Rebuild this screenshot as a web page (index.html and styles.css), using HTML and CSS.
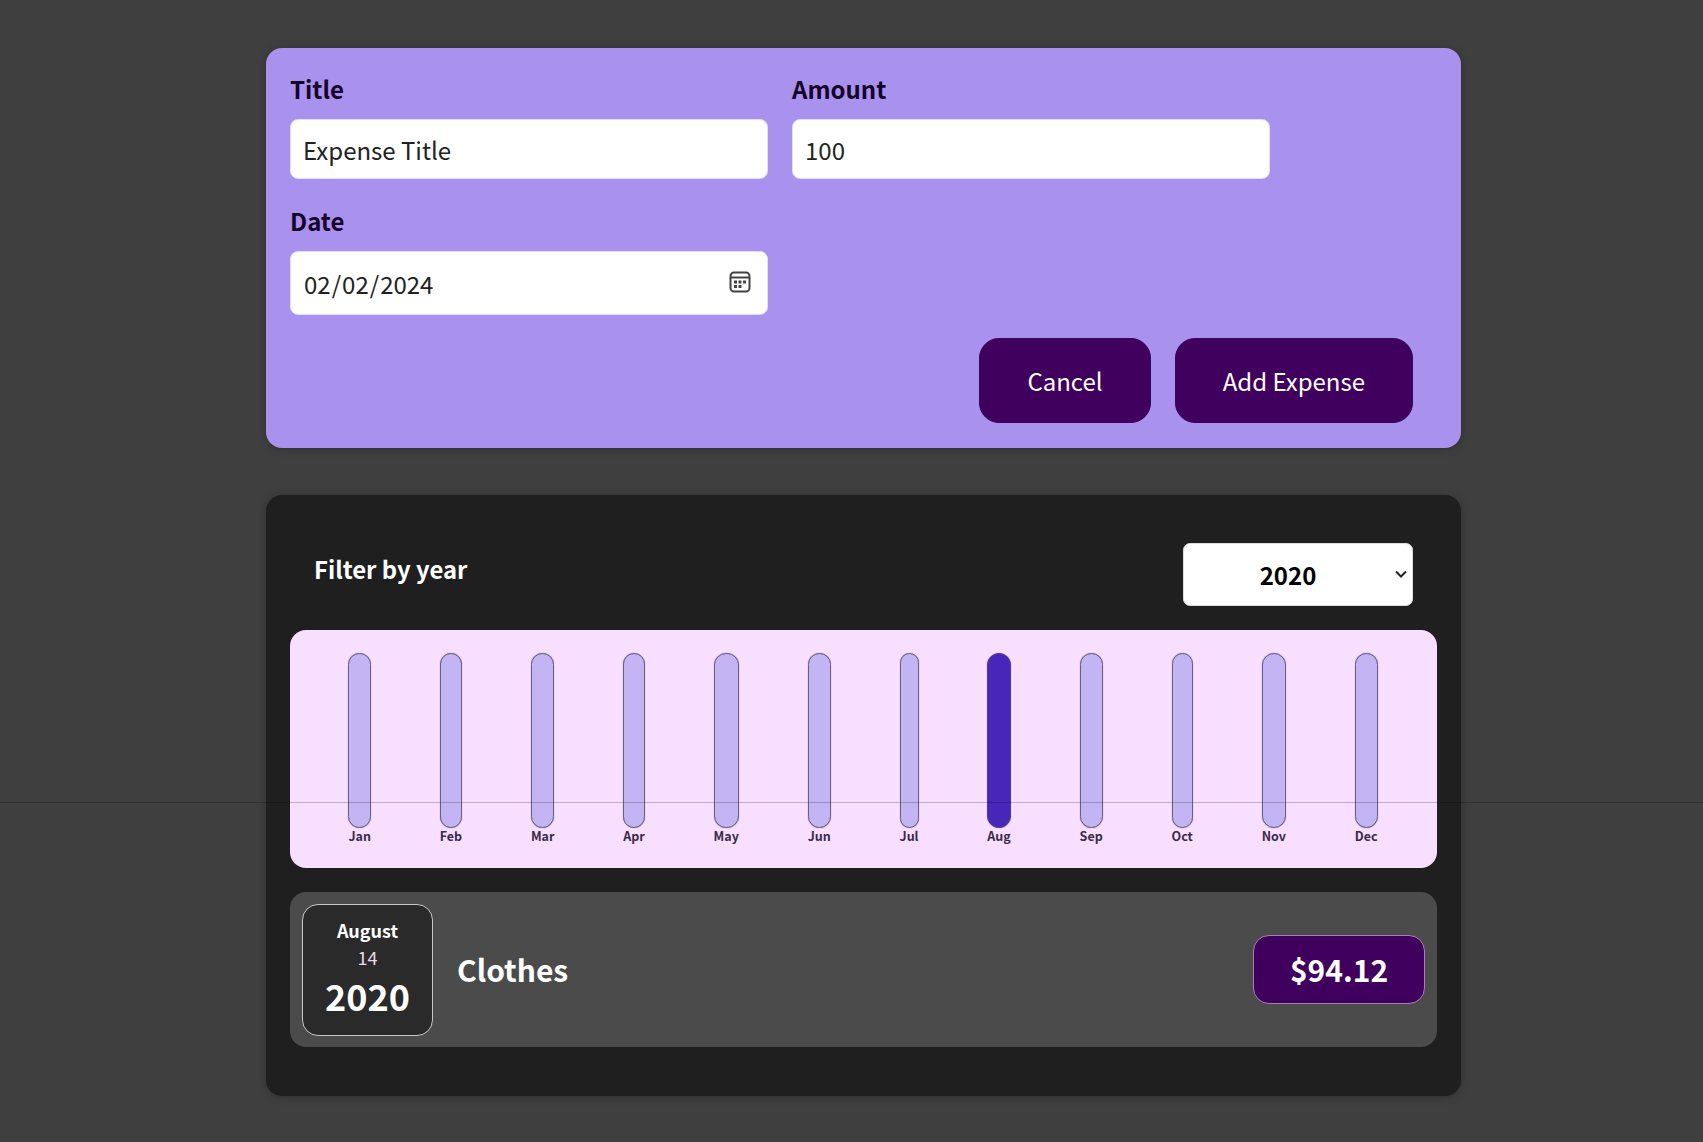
FILE: index.html
```html
<!DOCTYPE html>
<html lang="en">
<head>
  <meta charset="UTF-8" />
  <title>Expenses</title>
  <link rel="stylesheet" href="styles.css">
</head>
<body>
  <div class="screen-line"></div>

  <div class="new-expense">
    <form>
      <div class="controls">
        <div class="control">
          <label>Title</label>
          <input type="text" value="Expense Title" />
        </div>
        <div class="control">
          <label>Amount</label>
          <input type="text" value="100" />
        </div>
        <div class="control">
          <label>Date</label>
          <div class="date-wrap">
            <input class="date-input" type="date" value="2024-02-02" />
            <!-- 달력 아이콘 -->
            <svg class="date-icon" viewBox="0 0 22 22" width="22" height="22" fill="none" stroke="#444" stroke-width="2">
              <rect x="1.5" y="1.5" width="19" height="19" rx="3.5" />
              <path d="M1.5 6.5h19" />
              <g fill="#444" stroke="none">
                <rect x="5" y="9.5" width="3" height="3" />
                <rect x="9.5" y="9.5" width="3" height="3" />
                <rect x="14" y="9.5" width="3" height="3" />
                <rect x="5" y="14" width="3" height="3" />
                <rect x="9.5" y="14" width="3" height="3" />
              </g>
            </svg>
          </div>
        </div>
      </div>
      <div class="actions">
        <button type="button">Cancel</button>
        <button type="submit">Add Expense</button>
      </div>
    </form>
  </div>

  <div class="expenses">
    <div class="filter">
      <label>Filter by year</label>
      <div class="select-wrap">
        <select>
          <option>2020</option>
          <option>2021</option>
          <option>2022</option>
        </select>
        <svg class="select-icon" viewBox="0 0 12 8" width="12" height="8" fill="none" stroke="#222" stroke-width="2">
          <path d="M1 1.5l5 5 5-5" />
        </svg>
      </div>
    </div>

    <div class="chart">
      <div class="chart-bar"><div class="bar"></div><div class="bar-label">Jan</div></div>
      <div class="chart-bar"><div class="bar"></div><div class="bar-label">Feb</div></div>
      <div class="chart-bar"><div class="bar"></div><div class="bar-label">Mar</div></div>
      <div class="chart-bar"><div class="bar"></div><div class="bar-label">Apr</div></div>
      <div class="chart-bar"><div class="bar"></div><div class="bar-label">May</div></div>
      <div class="chart-bar"><div class="bar"></div><div class="bar-label">Jun</div></div>
      <div class="chart-bar"><div class="bar"></div><div class="bar-label">Jul</div></div>
      <div class="chart-bar"><div class="bar bar-active"></div><div class="bar-label">Aug</div></div>
      <div class="chart-bar"><div class="bar"></div><div class="bar-label">Sep</div></div>
      <div class="chart-bar"><div class="bar"></div><div class="bar-label">Oct</div></div>
      <div class="chart-bar"><div class="bar"></div><div class="bar-label">Nov</div></div>
      <div class="chart-bar"><div class="bar"></div><div class="bar-label">Dec</div></div>
    </div>

    <div class="expense-item">
      <div class="expense-date">
        <div class="expense-month">August</div>
        <div class="expense-day">14</div>
        <div class="expense-year">2020</div>
      </div>
      <h2 class="expense-title">Clothes</h2>
      <div class="expense-price">$94.12</div>
    </div>
  </div>
</body>
</html>
```

FILE: styles.css
```css
* {
  box-sizing: border-box;
}

body {
  margin: 0;
  padding: 48px 0 46px 24px;
  background-color: #3f3f3f;
  font-family: "Noto Sans CJK KR", "Noto Sans", sans-serif;
}

/* thin line that runs over the whole screen */
.screen-line {
  position: absolute;
  top: 802px;
  left: 0;
  width: 100%;
  height: 1px;
  background-color: rgba(0, 0, 0, 0.22);
  z-index: 10;
}

/* new expense form */
.new-expense {
  width: 1195px;
  height: 400px;
  margin: 0 auto 47px;
  padding: 25px 24px 0;
  background-color: #a892ee;
  border-radius: 16px;
  box-shadow: 0 1px 8px rgba(0, 0, 0, 0.25);
}

.controls {
  display: flex;
  flex-wrap: wrap;
  gap: 26px 24px;
}

.control {
  width: 478px;
}

.control label {
  display: block;
  margin-bottom: 14px;
  font-size: 24px;
  line-height: 32px;
  font-weight: 700;
  color: #14022a;
}

.control input {
  display: block;
  width: 100%;
  height: 60px;
  padding: 8px 12px;
  font-family: inherit;
  font-size: 24px;
  color: #222;
  background-color: #fff;
  border: 1px solid #e6dcf7;
  border-radius: 8px;
}

.control .date-input {
  height: 64px;
}

.date-wrap {
  position: relative;
}

/* 기본 아이콘은 숨기고 svg를 위에 올림 */
.date-input::-webkit-calendar-picker-indicator {
  opacity: 0;
}

.date-icon {
  position: absolute;
  top: 20px;
  right: 17px;
  pointer-events: none;
}

.actions {
  display: flex;
  justify-content: flex-end;
  gap: 24px;
  margin-top: 23px;
  padding-right: 24px;
}

.actions button {
  height: 85px;
  padding: 0 47px;
  font-family: inherit;
  font-size: 24px;
  color: #fff;
  background-color: #40005d;
  border: 1px solid #40005d;
  border-radius: 20px;
  cursor: pointer;
}

/* expense list */
.expenses {
  width: 1195px;
  height: 601px;
  margin: 0 auto;
  padding: 24px;
  background-color: #1f1f1f;
  border-radius: 16px;
  box-shadow: 0 1px 8px rgba(0, 0, 0, 0.25);
}

.filter {
  display: flex;
  align-items: center;
  justify-content: space-between;
  padding: 24px 24px 0;
  height: 87px;
  color: #fff;
}

.filter label {
  margin-bottom: 13px;
  font-size: 23.8px;
  font-weight: 700;
}

.select-wrap {
  position: relative;
}

.filter select {
  display: block;
  width: 230px;
  height: 63px;
  padding: 0 20px 0 0;
  font-family: inherit;
  font-size: 24px;
  font-weight: 700;
  text-align: center;
  appearance: none;
  background-color: #fff;
  border: 1px solid #ddd;
  border-radius: 7px;
}

.select-icon {
  position: absolute;
  top: 27px;
  right: 6px;
  pointer-events: none;
}

.chart {
  display: flex;
  justify-content: space-around;
  height: 238px;
  margin-top: 24px;
  padding: 23px 25px 0 24px;
  background-color: #f8dfff;
  border-radius: 16px;
}

.chart-bar {
  display: flex;
  flex-direction: column;
  align-items: stretch;
}

.bar {
  height: 175px;
  background-color: #c3b4f3;
  border: 1px solid #6a5f80;
  border-radius: 12px;
  box-shadow: 0 0 1px rgba(70, 60, 90, 0.6);
}

.bar-active {
  background-color: #4826b9;
  border-color: #4f3a9e;
}

.bar-label {
  font-size: 12.5px;
  line-height: 16px;
  font-weight: 700;
  text-align: center;
  color: #3a2a4a;
}

.expense-item {
  display: flex;
  align-items: center;
  height: 155px;
  margin-top: 24px;
  padding: 0 12px;
  background-color: #4b4b4b;
  border-radius: 16px;
}

.expense-date {
  display: flex;
  flex-direction: column;
  align-items: center;
  justify-content: center;
  width: 131px;
  height: 132px;
  padding-bottom: 2px;
  color: #fff;
  background-color: #2a2a2a;
  border: 1px solid #c8c8c8;
  border-radius: 16px;
}

.expense-month {
  font-size: 18px;
  font-weight: 700;
  line-height: 27px;
}

.expense-day {
  font-size: 18px;
  line-height: 26px;
  color: #e8dcec;
}

.expense-year {
  margin-top: 1px;
  font-size: 36px;
  font-weight: 700;
  line-height: 49px;
}

.expense-title {
  flex: 1;
  margin: 0 0 2px 24px;
  font-size: 30px;
  font-weight: 700;
  color: #fff;
}

.expense-price {
  display: flex;
  align-items: center;
  justify-content: center;
  width: 172px;
  height: 69px;
  padding-bottom: 2px;
  font-size: 30px;
  font-weight: 700;
  color: #fff;
  background-color: #40005d;
  border: 1px solid #a880b8;
  border-radius: 16px;
}
```
